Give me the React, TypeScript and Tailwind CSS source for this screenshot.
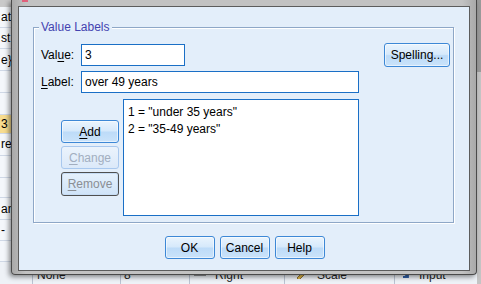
const btnBase =
  "flex items-center justify-center rounded-[3px] border text-[12px] leading-none";
const blueBtn =
  "border-[#3d88d6] bg-[linear-gradient(#eaf4fd,#d6e9fb_47%,#bddbf8_53%,#cae3fa)] text-black shadow-[inset_0_0_0_1px_rgba(255,255,255,0.55)]";

const leftRows = [
  { h: 22, text: "ati" },
  { h: 22, text: "st" },
  { h: 23, text: "e}." },
  { h: 23, text: "" },
  { h: 22, text: "" },
  { h: 20, text: "3", hi: true },
  { h: 23, text: "re" },
  { h: 23, text: "" },
  { h: 21, text: "" },
  { h: 22, text: "an" },
  { h: 22, text: "-" },
  { h: 22, text: "" },
];

function U({ c }: { c: string }) {
  return <span className="underline underline-offset-2">{c}</span>;
}

function DataGrid() {
  return (
    <div className="flex h-full">
      <div className="flex w-[477px] flex-col">
        <div className="h-[7px] bg-[#c9c9c9]" />
        {leftRows.map((r, i) => (
          <div
            key={i}
            style={{ height: r.h }}
            className={`flex items-center border-b border-[#cfd8e6] pl-[1px] ${
              r.hi ? "bg-[#f7dc8f]" : "bg-[#f4f7fb]"
            }`}
          >
            <span className="whitespace-nowrap">{r.text}</span>
          </div>
        ))}
        <div className="flex flex-1 items-start bg-[#eef2f7] pt-[4px] text-[#222]">
          <div className="w-[33px] border-r border-[#b9c3d2] h-full" />
          <div className="w-[88px] border-r border-[#b9c3d2] h-full pl-[4px]">None</div>
          <div className="w-[69px] border-r border-[#b9c3d2] h-full pl-[3px]">8</div>
          <div className="flex w-[95px] h-full gap-[9px] pl-[4px] border-r border-[#b9c3d2]">
            <svg width="12" height="10" viewBox="0 0 12 10" className="mt-[2px]">
              <path d="M0 1h12M4 4h8M0 7h12" stroke="#333" strokeWidth="1.2" />
            </svg>
            <span>Right</span>
          </div>
          <div className="flex w-[110px] h-full gap-[6px] pl-[10px] border-r border-[#b9c3d2]">
            <svg width="16" height="12" viewBox="0 0 16 12" className="mt-[1px]">
              <path d="M2 11l9-9 2 2-9 9z" fill="#e0b84a" stroke="#7a5a1a" strokeWidth="0.8" />
            </svg>
            <span>Scale</span>
          </div>
          <div className="flex flex-1 h-full gap-[8px] pl-[4px]">
            <svg width="12" height="12" viewBox="0 0 12 12" className="mt-[1px]">
              <path d="M1 2l8 8M9 5v5H4" stroke="#2f5fa8" strokeWidth="1.8" fill="none" />
            </svg>
            <span>Input</span>
          </div>
        </div>
      </div>
      <div className="flex w-[4px] flex-col">
        <div className="h-[72px] bg-[#9a9a9a]" />
        <div className="flex-1 bg-[#c4c4c4]" />
      </div>
    </div>
  );
}

function Dialog() {
  return (
    <div className="absolute left-[11px] top-0 h-[275px] w-[466px] rounded-b-[4px] border border-t-0 border-[#4a4a4a] bg-[linear-gradient(90deg,#a9a9a9,#c2c2c2_3%,#c2c2c2_97%,#a9a9a9)] px-[6px] pt-[6px] shadow-[-2px_2px_5px_rgba(0,0,0,0.45)]">
      <div className="absolute left-[10px] top-0 h-[2px] w-[6px] bg-[#e0607a]" />
      <div className="flex h-[265px] flex-col border border-[#5c5c5c] bg-[#e3eefa]">
        <div className="relative ml-[14px] mt-[20px] flex h-[196px] w-[421px] flex-col border border-[#8ea7c7] pl-[7px] pr-[3px] pt-[15px] shadow-[inset_1px_1px_0_#fff,1px_1px_0_#fff]">
          <span className="absolute left-[5px] top-[-8px] bg-[#e3eefa] px-[2px] leading-[14px] text-[#4343b0]">
            Value Labels
          </span>
          <div className="flex h-[24px] items-center">
            <span className="w-[40px]">
              Val<U c="u" />e:
            </span>
            <div className="flex h-[22px] w-[104px] items-center border border-[#1a6fc6] bg-white pl-[3px]">
              3
            </div>
            <div className="flex-1" />
            <button className={`${btnBase} ${blueBtn} h-[24px] w-[66px]`}>Spelling...</button>
          </div>
          <div className="mt-[4px] flex h-[22px] items-center">
            <span className="w-[40px]">
              <U c="L" />abel:
            </span>
            <div className="flex h-[22px] w-[278px] items-center border border-[#1a6fc6] bg-white pl-[3px]">
              over 49 years
            </div>
          </div>
          <div className="mt-[6px] flex">
            <div className="ml-[20px] mt-[21px] flex w-[58px] flex-col gap-[3px]">
              <button className={`${btnBase} ${blueBtn} h-[23px]`}>
                <U c="A" />dd
              </button>
              <button
                className={`${btnBase} h-[23px] border-[#a9c8ee] bg-[linear-gradient(#ebf3fc,#dbe9f9)] text-[#a2aec0]`}
              >
                <U c="C" />hange
              </button>
              <button
                className={`${btnBase} h-[24px] border-[#4f4f4f] bg-[linear-gradient(#e6f1fc,#cfe3f8)] text-[#8a8e94] shadow-[inset_0_0_0_1px_#c6dcf4]`}
              >
                <U c="R" />emove
              </button>
            </div>
            <div className="ml-[4px] flex h-[117px] w-[236px] flex-col border border-[#1a6fc6] bg-white pl-[4px] pt-[4px] leading-[17px]">
              <span>1 = "under 35 years"</span>
              <span>2 = "35-49 years"</span>
            </div>
          </div>
        </div>
        <div className="mt-[13px] flex justify-center gap-[5px] pl-[1px]">
          <button className={`${btnBase} ${blueBtn} h-[23px] w-[50px]`}>OK</button>
          <button className={`${btnBase} ${blueBtn} h-[23px] w-[50px]`}>Cancel</button>
          <button className={`${btnBase} ${blueBtn} h-[23px] w-[50px]`}>Help</button>
        </div>
      </div>
    </div>
  );
}

export default function App() {
  return (
    <div className="relative h-[284px] w-[481px] overflow-hidden bg-white font-['Liberation_Sans',Arial,sans-serif] text-[12px] text-black">
      <DataGrid />
      <Dialog />
    </div>
  );
}
